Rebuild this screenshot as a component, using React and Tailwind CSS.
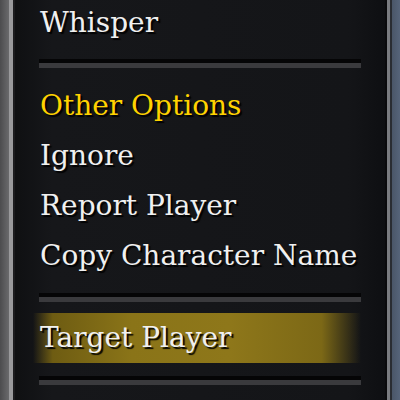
export default function App() {
  const font = { fontFamily: '"DejaVu Serif", serif' };
  const white = "text-[#f0f0f0] [text-shadow:2px_2px_1px_rgba(0,0,0,0.95)]";

  const Separator = ({ className = "" }) => (
    <div className={`ml-[24px] mr-[24px] ${className}`}>
      <div className="h-[4px] bg-[#050506]" />
      <div className="h-[5px] bg-[#3a3a3d]" />
    </div>
  );

  return (
    <div className="flex h-[400px] w-[400px] overflow-hidden bg-[#141518]" style={font}>
      {/* left frame */}
      <div className="flex h-full shrink-0">
        <div className="w-[9px] bg-[linear-gradient(to_right,#4c4c4e,#6a6a6c)]" />
        <div className="w-[4px] bg-[#9a9a9c]" />
        <div className="w-[2px] bg-[#1c1c1e]" />
      </div>

      {/* menu panel */}
      <div className="flex flex-1 flex-col bg-[linear-gradient(to_right,#0f1012,#16171a_10%,#141518_90%,#0e0f12)]">
        <div className={`h-[46px] pl-[25px] text-[28px] leading-[46px] ${white}`}>Whisper</div>

        <Separator className="mt-[13px]" />

        <div className="mt-[13px] h-[50px] pl-[25px] text-[28px] leading-[50px] text-[#ffd200] [text-shadow:2px_2px_1px_rgba(0,0,0,0.95)]">
          Other Options
        </div>
        <div className={`h-[50px] pl-[25px] text-[28px] leading-[50px] ${white}`}>Ignore</div>
        <div className={`h-[50px] pl-[25px] text-[28px] leading-[50px] ${white}`}>Report Player</div>
        <div className={`h-[50px] pl-[25px] text-[28px] leading-[50px] ${white}`}>Copy Character Name</div>

        <Separator className="mt-[12px]" />

        <div
          className={`ml-[18px] mr-[24px] mt-[11px] h-[50px] pl-[7px] text-[28px] leading-[50px] ${white} bg-[linear-gradient(to_right,rgba(120,100,18,0),#6e5c12_6%,#8a7418_30%,#8e771a_60%,#7c6816_88%,rgba(120,100,18,0))]`}
        >
          Target Player
        </div>

        <Separator className="mt-[13px]" />
      </div>

      {/* right frame */}
      <div className="flex h-full shrink-0">
        <div className="w-[2px] bg-[#0a0a0c]" />
        <div className="w-[3px] bg-[#7a7c80]" />
        <div className="w-[2px] bg-[#2a2d33]" />
        <div className="w-[8px] bg-[linear-gradient(to_right,#4a5668,#56647a)]" />
      </div>
    </div>
  );
}
